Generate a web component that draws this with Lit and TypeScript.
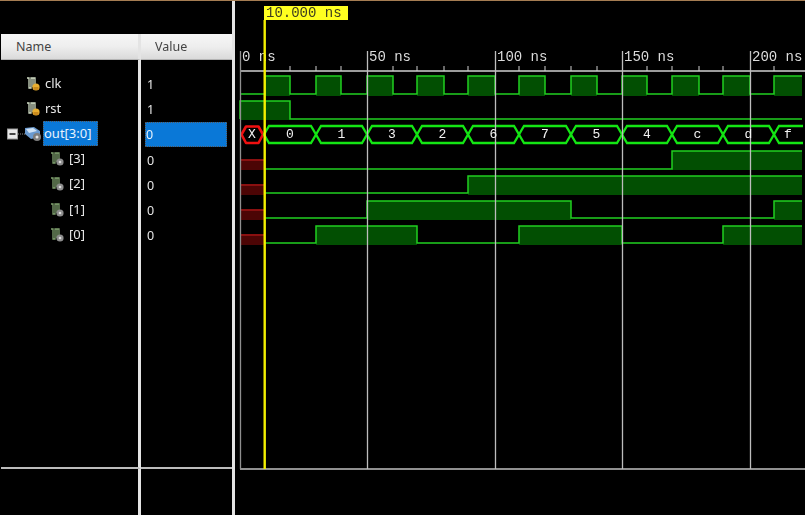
import { LitElement, html, svg, css } from 'lit';
import { customElement } from 'lit/decorators.js';

// x positions of the clock edges, read off the time axis
const EDGES = [265, 290, 316, 341, 367, 393, 417, 444, 468, 495, 519, 545, 571, 597, 622, 647, 672, 699, 723, 750, 774];
const MAJOR = [{ x: 240, t: '0 ns' }, { x: 367, t: '50 ns' }, { x: 495, t: '100 ns' }, { x: 622, t: '150 ns' }, { x: 750, t: '200 ns' }];
const MINOR = [290, 316, 341, 393, 417, 444, 468, 519, 545, 571, 597, 647, 672, 699, 723, 774];
const END = 802;

interface Wave { top: number; low: number; bottom: number; start: number; runs: [number, number][]; }

const clkRuns = (): [number, number][] => {
  const runs: [number, number][] = [];
  for (let i = 0; i < EDGES.length; i += 2) runs.push([EDGES[i], EDGES[i + 1] ?? END]);
  return runs;
};

const WAVES: Wave[] = [
  { top: 76, low: 94, bottom: 96, start: 240, runs: clkRuns() },
  { top: 101, low: 119, bottom: 120, start: 240, runs: [[240, 290]] },
  { top: 151, low: 169, bottom: 170, start: 265, runs: [[672, END]] },
  { top: 176, low: 193, bottom: 195, start: 265, runs: [[468, END]] },
  { top: 201, low: 218, bottom: 220, start: 265, runs: [[367, 571], [774, END]] },
  { top: 226, low: 243, bottom: 245, start: 265, runs: [[316, 417], [519, 622], [723, END]] },
];

const UNKNOWN = [159, 184, 209, 234];

const BUS = [
  { a: 264, b: 316, t: '0' }, { a: 316, b: 367, t: '1' }, { a: 367, b: 417, t: '3' }, { a: 417, b: 468, t: '2' },
  { a: 468, b: 519, t: '6' }, { a: 519, b: 571, t: '7' }, { a: 571, b: 622, t: '5' }, { a: 622, b: 672, t: '4' },
  { a: 672, b: 723, t: 'c' }, { a: 723, b: 774, t: 'd' }, { a: 774, b: 802, t: 'f' },
];

const SIGNALS = [
  { name: 'clk', value: '1', kind: 'in', indent: 26 },
  { name: 'rst', value: '1', kind: 'in', indent: 26 },
  { name: 'out[3:0]', value: '0', kind: 'bus', indent: 7, selected: true },
  { name: '[3]', value: '0', kind: 'out', indent: 50 },
  { name: '[2]', value: '0', kind: 'out', indent: 50 },
  { name: '[1]', value: '0', kind: 'out', indent: 50 },
  { name: '[0]', value: '0', kind: 'out', indent: 50 },
];

@customElement('app-root')
export class AppRoot extends LitElement {
  static styles = css`
    :host {
      display: block;
      width: 805px;
      height: 515px;
      overflow: hidden;
      background: #000;
      font-family: 'Noto Sans', sans-serif;
    }
    .window {
      display: flex;
      height: 514px;
      border-top: 1px solid #a57c52;
      filter: blur(0.35px);
    }
    .col {
      display: flex;
      flex-direction: column;
      flex: none;
      padding-top: 33px;
      box-sizing: border-box;
    }
    .names { width: 141px; padding-left: 1px; }
    .values { width: 91px; }
    .gap { width: 3px; flex: none; background: #e4e4e4; }
    .head {
      flex: none;
      height: 26px;
      box-sizing: border-box;
      display: flex;
      align-items: center;
      background: linear-gradient(#f6f6f6, #eeeeee 50%, #dadada);
      border-bottom: 1px solid #b4b4b4;
      color: #444;
      font-size: 12.5px;
    }
    .names .head { padding-left: 15px; border-right: 3px solid #e4e4e4; }
    .values .head { padding-left: 14px; }
    .rows {
      flex: none;
      height: 409px;
      box-sizing: border-box;
      border-bottom: 2px solid #bcbcbc;
    }
    .names .rows { padding-top: 11px; border-right: 3px solid #e4e4e4; }
    .values .rows { padding-top: 12px; }
    .foot { flex: 1; }
    .names .foot { border-right: 3px solid #e4e4e4; }
    .row {
      height: 25.2px;
      display: flex;
      align-items: center;
      color: #e6e6e6;
      font-size: 13px;
    }
    .values .row { font-size: 12.5px; }
    .row svg { flex: none; display: block; }
    .label { margin-left: 3px; padding: 0 1px 2px; }
    .label.selected {
      height: 25px;
      width: 55px;
      margin-left: 1px;
      box-sizing: border-box;
      display: flex;
      align-items: center;
      background: #0a78d7;
      outline: 1px dotted #555;
      outline-offset: -1px;
      color: #e8f2fc;
      white-space: nowrap;
    }
    .tree { display: flex; align-items: center; }
    .val { margin-left: 5px; padding-left: 1px; }
    .val.selected {
      width: 82px;
      height: 25px;
      box-sizing: border-box;
      display: flex;
      align-items: center;
      background: #0a78d7;
      outline: 1px dotted #555;
      outline-offset: -1px;
      color: #e8f2fc;
      margin-left: 4px;
    }
    .wave { flex: 1; display: block; }
    .wave text {
      font-family: 'Liberation Mono', monospace;
      font-size: 14px;
      fill: #dcdcdc;
    }
    .wave .cursor-text { fill: #3c3c20; }
    .wave .bus-text { font-size: 13px; fill: #f2f2f2; text-anchor: middle; }
  `;

  private icon(kind: string) {
    if (kind === 'bus') {
      return svg`<svg width="17" height="16" viewBox="0 0 17 16">
        <path d="M0 2 L9 1 L15 5 L15 11 L6 13 L0 8 Z" fill="#6a9ad0"/>
        <path d="M1 3 L8 2 L12 5 L4 7 Z" fill="#cfe2f5"/>
        <circle cx="12" cy="11" r="4" fill="#7d7d7d"/>
        <circle cx="12" cy="11" r="1.5" fill="#e4e4e4"/>
      </svg>`;
    }
    const stroke = kind === 'in' ? '#d0dcc4' : '#7fa06e';
    return svg`<svg width="15" height="16" viewBox="0 0 15 16">
      <path d="M1 2 H3 V12 H5 V2 H7 V11 M7 2 H9 V8" fill="none" stroke="${stroke}" stroke-width="1.3"/>
      ${kind === 'in'
        ? svg`<circle cx="10" cy="11" r="3.6" fill="#e8ae30"/><rect x="7.5" y="11" width="5" height="3" fill="#c98a1e"/>`
        : svg`<circle cx="10" cy="11" r="3.6" fill="#8c8c8c"/><circle cx="10" cy="11" r="1.3" fill="#dcdcdc"/>`}
    </svg>`;
  }

  private expander() {
    return svg`<svg width="18" height="12" viewBox="0 0 18 12">
      <rect x="0.5" y="1" width="10" height="10" fill="#e8e8e8" stroke="#9a9a9a"/>
      <rect x="2.5" y="5" width="6" height="2" fill="#444"/>
      <path d="M11 6 H18" stroke="#888" stroke-dasharray="1 1"/>
    </svg>`;
  }

  private waveShape(w: Wave) {
    const pts: string[] = [`M${w.start} ${w.low}`];
    for (const [a, b] of w.runs) {
      pts.push(`L${a} ${w.low} L${a} ${w.top}`);
      pts.push(b >= END ? `L${END} ${w.top}` : `L${b} ${w.top} L${b} ${w.low}`);
    }
    if (w.runs[w.runs.length - 1][1] < END) pts.push(`L${END} ${w.low}`);
    return svg`
      ${w.runs.map(([a, b]) =>
        svg`<rect x="${a}" y="${w.top}" width="${b - a}" height="${w.bottom - w.top}" fill="#024f02"/>`)}
      <path d="${pts.join(' ')}" fill="none" stroke="#20d020" stroke-width="1.5"/>`;
  }

  private waveform() {
    // drawn in page coordinates, the svg starts at x = 235
    return html`<svg class="wave" width="570" height="514" viewBox="235 1 570 514">
      <line x1="240" y1="71" x2="805" y2="71" stroke="#d0d0d0" stroke-width="1.3"/>
      <line x1="240" y1="469" x2="805" y2="469" stroke="#c0c0c0" stroke-width="1.3"/>
      ${WAVES.map((w) => this.waveShape(w))}
      ${UNKNOWN.map((y) => svg`
        <rect x="240" y="${y}" width="24" height="11" fill="#4c0505"/>
        <rect x="240" y="${y}" width="24" height="2" fill="#8a1010"/>`)}
      <path d="M241.5 134.5 L246 126.5 L258.5 126.5 L263 134.5 L258.5 143 L246 143 Z" fill="none" stroke="#f01010" stroke-width="2.6" stroke-linejoin="round"/>
      ${BUS.map((s) => svg`
        <path d="${s.b >= END
          ? `M${s.b + 1} 126 L${s.a + 5} 126 L${s.a} 134.5 L${s.a + 5} 143 L${s.b + 1} 143`
          : `M${s.a} 134.5 L${s.a + 5} 126 L${s.b - 5} 126 L${s.b} 134.5 L${s.b - 5} 143 L${s.a + 5} 143 Z`}"
          fill="none" stroke="#14e614" stroke-width="2.3"/>`)}
      ${MAJOR.map((m) => svg`
        <line x1="${m.x + 0.5}" y1="51" x2="${m.x + 0.5}" y2="469" stroke="${m.x === 240 ? '#8f8f8f' : '#bdbdbd'}" stroke-width="1.3"/>
        <text x="${m.x + 2}" y="61">${m.t}</text>`)}
      ${MINOR.map((x) => svg`<line x1="${x}" y1="66" x2="${x}" y2="71" stroke="#d0d0d0"/>`)}
      <text class="bus-text" x="252" y="138">X</text>
      ${BUS.map((s) => svg`<text class="bus-text" x="${(s.a + s.b) / 2}" y="138">${s.t}</text>`)}
      <rect x="263.5" y="20" width="2.4" height="449" fill="#f4f000"/>
      <rect x="264" y="6" width="84" height="14" fill="#ffff20"/>
      <text class="cursor-text" x="266" y="17">10.000 ns</text>
    </svg>`;
  }

  render() {
    return html`
      <div class="window">
        <div class="col names">
          <div class="head">Name</div>
          <div class="rows">
            ${SIGNALS.map((s) => html`
              <div class="row" style="padding-left: ${s.indent - 1}px">
                <div class="tree">
                  ${s.kind === 'bus' ? this.expander() : ''}
                  ${this.icon(s.kind)}
                </div>
                <span class="label ${s.selected ? 'selected' : ''}">${s.name}</span>
              </div>`)}
          </div>
          <div class="foot"></div>
        </div>
        <div class="col values">
          <div class="head">Value</div>
          <div class="rows">
            ${SIGNALS.map((s) => html`
              <div class="row"><span class="val ${s.selected ? 'selected' : ''}">${s.value}</span></div>`)}
          </div>
          <div class="foot"></div>
        </div>
        <div class="gap"></div>
        ${this.waveform()}
      </div>
    `;
  }
}
